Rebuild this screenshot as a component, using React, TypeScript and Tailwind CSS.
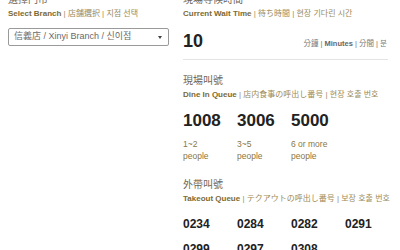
const dineIn = [
  { num: '1008', size: '1~2', unit: 'people' },
  { num: '3006', size: '3~5', unit: 'people' },
  { num: '5000', size: '6 or more', unit: 'people' },
];

const takeout = ['0234', '0284', '0282', '0291', '0299', '0297', '0308'];

const font = { fontFamily: '"Liberation Sans", "Noto Sans CJK TC", sans-serif' };

function Heading({ title, en, rest }: { title: string; en: string; rest: string }) {
  return (
    <div>
      <div className="text-[10px] leading-[12px] text-[#6e6656]">{title}</div>
      <div className="mt-[2px] text-[8px] leading-[11px] whitespace-nowrap">
        <span className="font-bold text-[#7c6a32]">{en}</span>
        <span className="text-[#9a8a5a]"> | {rest}</span>
      </div>
    </div>
  );
}

export default function App() {
  return (
    <div className="w-[400px] h-[250px] overflow-hidden bg-white" style={font}>
      <div className="grid grid-cols-[161px_minmax(0,1fr)] gap-x-[14px] pl-2 pr-3 -mt-[6px]">
        <section>
          <Heading title="選擇門市" en="Select Branch" rest="店舗選択 | 지점 선택" />
          <div className="mt-[9px] h-[18px] flex items-center justify-between border border-[#9a9a9a] rounded-[2px] pl-[5px] pr-[6px]">
            <span className="text-[9px] text-[#6a6a6a]">信義店 / Xinyi Branch / 신이점</span>
            <span className="w-0 h-0 border-l-[2.5px] border-r-[2.5px] border-t-[3px] border-l-transparent border-r-transparent border-t-[#444]" />
          </div>
        </section>

        <section>
          <Heading title="現場等候時間" en="Current Wait Time" rest="待ち時間 | 현장 기다린 시간" />
          <div className="mt-[13px] pb-[9px] border-b border-[#e4e4e4] flex items-end justify-between">
            <span className="text-[18px] leading-[18px] font-bold text-[#222]">10</span>
            <span className="text-[7.5px] leading-[10px] text-[#777] pb-[1px] pr-[1px]">
              分鐘 | <span className="font-bold text-[#666]">Minutes</span> | 分間 | 분
            </span>
          </div>

          <div className="mt-[15px]">
            <Heading title="現場叫號" en="Dine In Queue" rest="店内食事の呼出し番号 | 현장 호출 번호" />
          </div>
          <div className="mt-[12px] grid grid-cols-[54px_54px_54px_54px]">
            {dineIn.map((d) => (
              <div key={d.num}>
                <div className="text-[17px] leading-[17px] font-bold text-[#222]">{d.num}</div>
                <div className="mt-[9px] text-[8.5px] leading-[12px] text-[#8a7740]">
                  <div>{d.size}</div>
                  <div>{d.unit}</div>
                </div>
              </div>
            ))}
          </div>

          <div className="mt-[17px]">
            <Heading title="外帶叫號" en="Takeout Queue" rest="テクアウトの呼出し番号 | 보장 호출 번호" />
          </div>
          <div className="mt-[14px] grid grid-cols-[54px_54px_54px_54px] gap-y-[13px]">
            {takeout.map((n) => (
              <div key={n} className="text-[12px] leading-[12px] font-bold text-[#222]">{n}</div>
            ))}
          </div>
        </section>
      </div>
    </div>
  );
}
